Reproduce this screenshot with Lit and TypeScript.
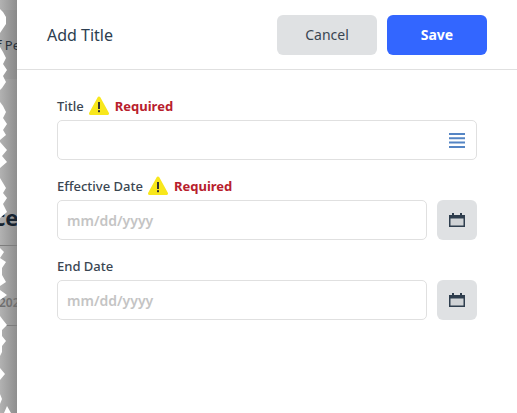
import { LitElement, html, css, svg } from "lit";
import { customElement } from "lit/decorators.js";

const teeth =
  "0,0 0,9 3,12 6,17 6,24 2,30 0,33 0,47 3,52 6,58 3,64 7,70 3,76 6,82 2,88 0,90 0,102 3,106 6,112 3,118 7,124 3,130 6,135 " +
  "0,140 0,142 7,150 2,156 7,162 0,168 0,178 3,183 6,188 3,193 7,198 3,204 7,212 0,218 0,248 4,252 0,258 6,262 2,268 2,275 6,282 " +
  "0,286 0,290 7,295 0,300 0,316 3,320 7,325 2,330 2,336 6,341 2,346 2,352 0,356 0,368 5,374 0,380 0,394 2,399 0,404 0,413 4,413 7,406 11,413 0,413";

const warn = html`<svg class="warn" viewBox="0 0 20 20" aria-hidden="true">
  <path d="M10 2 18.5 17.5H1.5Z" fill="#f8e71c" stroke="#f8e71c" stroke-width="3" stroke-linejoin="round" />
  <rect x="9" y="6" width="2" height="7" fill="#333" />
  <rect x="9" y="14.2" width="2" height="2" fill="#333" />
</svg>`;

const calendar = html`<svg class="cal" viewBox="0 0 16 14" aria-hidden="true">
  <path d="M3 0h2v2h6V0h2v2h3v12H0V2h3Z" fill="#2f3e4e" />
  <rect x="1.5" y="5.5" width="13" height="7" fill="#d0d3d6" />
</svg>`;

@customElement("app-root")
export class AppRoot extends LitElement {
  static styles = css`
    :host {
      display: flex;
      width: 517px;
      height: 413px;
      overflow: hidden;
      background: #fff;
      font-family: "Noto Sans", "Open Sans", sans-serif;
      color: #3a4652;
    }
    .backdrop {
      position: relative;
      flex: 0 0 17px;
      overflow: hidden;
      background: linear-gradient(90deg, #b2b2b2, #8e8e8e);
    }
    .band {
      position: absolute;
      inset: 10px 0 auto 0;
      height: 69px;
      background: rgba(0, 0, 0, 0.04);
    }
    .ghost {
      position: absolute;
      white-space: nowrap;
    }
    .pe {
      left: -3px;
      top: 36px;
      font-size: 13px;
      color: #26303a;
    }
    .ce {
      left: -6px;
      top: 202px;
      font-size: 22px;
      font-weight: 700;
      color: #17232f;
    }
    .yr {
      left: -1px;
      top: 294px;
      font-size: 12px;
      font-weight: 600;
      color: #6f6f6f;
    }
    .rule {
      position: absolute;
      left: 0;
      right: 0;
      height: 1px;
      background: #7d7d7d;
    }
    .r1 {
      top: 245px;
    }
    .r2 {
      top: 325px;
    }
    .tear {
      position: absolute;
      inset: 0;
      width: 17px;
      height: 413px;
    }
    .panel {
      flex: 1;
      min-width: 0;
    }
    header {
      display: flex;
      align-items: center;
      gap: 10px;
      height: 69px;
      padding: 0 30px;
      border-bottom: 1px solid #e0e0e0;
    }
    h1 {
      flex: 1;
      margin: 0;
      font-size: 16px;
      font-weight: 400;
      color: #2c3e50;
    }
    button {
      width: 100px;
      height: 40px;
      border: 0;
      border-radius: 6px;
      font: inherit;
      font-size: 14px;
    }
    .cancel {
      background: #dfe1e3;
      color: #3a4652;
    }
    .save {
      background: #3366ff;
      color: #fff;
      font-weight: 700;
    }
    form {
      display: flex;
      flex-direction: column;
      gap: 14px;
      padding: 24px 40px 0;
    }
    .label {
      display: flex;
      align-items: center;
      gap: 5px;
      box-sizing: border-box;
      height: 26px;
      padding-bottom: 2px;
      font-size: 13px;
      font-weight: 500;
    }
    .field {
      display: flex;
      flex-direction: column;
    }
    .warn {
      width: 20px;
      height: 20px;
    }
    .req {
      margin-left: 1px;
      color: #b8202c;
      font-weight: 700;
    }
    .row {
      display: flex;
      gap: 10px;
    }
    .input {
      flex: 0 0 auto;
      display: flex;
      align-items: center;
      justify-content: space-between;
      height: 40px;
      box-sizing: border-box;
      padding: 0 11px 0 9px;
      border: 1px solid #e0e0e0;
      border-radius: 5px;
      font-size: 14px;
      font-weight: 600;
      color: #c4c4c4;
    }
    .row .input {
      flex: 1 1 auto;
    }
    .lines {
      width: 16px;
      height: 15px;
    }
    .calbtn {
      display: flex;
      align-items: center;
      justify-content: center;
      width: 40px;
      height: 40px;
      border-radius: 6px;
      background: #dfe1e3;
    }
    .cal {
      width: 16px;
      height: 14px;
    }
  `;

  render() {
    return html`
      <div class="backdrop">
        <div class="band"></div>
        <span class="ghost pe">f Pe</span>
        <span class="ghost ce">ce</span>
        <span class="ghost yr">202</span>
        <div class="rule r1"></div>
        <div class="rule r2"></div>
        <svg class="tear" viewBox="0 0 17 413" aria-hidden="true">
          ${svg`<polygon points=${teeth} fill="#fff" />`}
        </svg>
      </div>
      <div class="panel">
        <header>
          <h1>Add Title</h1>
          <button class="cancel">Cancel</button>
          <button class="save">Save</button>
        </header>
        <form>
          <div class="field">
            <div class="label">Title ${warn} <span class="req">Required</span></div>
            <div class="input">
              <span></span>
              <svg class="lines" viewBox="0 0 16 15" aria-hidden="true">
                <path d="M0 1h16M0 5.3h16M0 9.6h16M0 14h16" stroke="#5585c4" stroke-width="2" />
              </svg>
            </div>
          </div>
          <div class="field">
            <div class="label">Effective Date ${warn} <span class="req">Required</span></div>
            <div class="row">
              <div class="input">mm/dd/yyyy</div>
              <div class="calbtn">${calendar}</div>
            </div>
          </div>
          <div class="field">
            <div class="label">End Date</div>
            <div class="row">
              <div class="input">mm/dd/yyyy</div>
              <div class="calbtn">${calendar}</div>
            </div>
          </div>
        </form>
      </div>
    `;
  }
}
